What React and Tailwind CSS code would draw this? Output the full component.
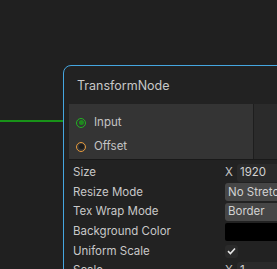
import React from 'react';

const props = [
    { label: "Size", kind: "vec", axis: "X", value: "1920" },
    { label: "Resize Mode", kind: "drop", value: "No Stretch" },
    { label: "Tex Wrap Mode", kind: "drop", value: "Border" },
    { label: "Background Color", kind: "color" },
    { label: "Uniform Scale", kind: "check" },
    { label: "Scale", kind: "vec", axis: "X", value: "1" },
];

const PropValue = ({ p }) => {
    if (p.kind === "vec") {
        return (
            <div className="flex items-center h-full">
                <span className="w-[12px] text-[#c4c4c4]">{p.axis}</span>
                <div className="flex-1 h-[18px] bg-[#2a2a2a] rounded-[3px] pl-[3px] flex items-center text-[#d2d2d2]">{p.value}</div>
            </div>
        );
    }
    if (p.kind === "drop") {
        return (
            <div className="h-[18px] bg-[#464646] rounded-[3px] pl-[3px] flex items-center text-[#d2d2d2] whitespace-nowrap overflow-hidden">{p.value}</div>
        );
    }
    if (p.kind === "color") {
        return <div className="h-[18px] bg-black rounded-[2px]" />;
    }
    return (
        <div className="w-[13px] h-[13px] bg-[#2a2a2a] rounded-[3px] flex items-center justify-center">
            <svg width="9" height="8" viewBox="0 0 9 8">
                <path d="M1 4.2 L3.4 6.5 L8 1.5" stroke="#e6e6e6" strokeWidth="1.6" fill="none" />
            </svg>
        </div>
    );
};

const Port = ({ label, color, fill }) => (
    <div className="flex items-center h-[24px] pl-[7px]">
        <div className={`w-[10px] h-[10px] rounded-full border-[1.5px] ${color} flex items-center justify-center`}>
            <div className={`w-[5px] h-[5px] rounded-full ${fill}`} />
        </div>
        <span className="ml-[8px] text-[#c4c4c4]">{label}</span>
    </div>
);

export default function App() {
    return (
        <div className="relative w-[277px] h-[269px] bg-[#202020] overflow-hidden text-[11.5px]" style={{ fontFamily: "Inter, 'Noto Sans', sans-serif" }}>
            <svg className="absolute left-0 top-0" width="277" height="269">
                <line x1="0" y1="121" x2="67" y2="121" stroke="#189218" strokeWidth="2" />
                <line x1="67" y1="121" x2="77" y2="121" stroke="#189218" strokeWidth="2" strokeDasharray="3 2" />
            </svg>
            <div className="absolute left-[63px] top-[65px] w-[260px] h-[230px] border border-[#45a6e0] rounded-tl-[8px] bg-[#222222]">
                <div className="h-[38px] flex items-center pl-[13px] pt-[2px] text-[12.5px] text-[#c8c8c8]">TransformNode</div>
                <div className="flex h-[56px] ml-[5px] border-b border-[#191919]">
                    <div className="w-[184px] bg-[#343434] flex flex-col justify-center pt-[6px]">
                        <Port label="Input" color="border-[#22b322]" fill="bg-[#1e8a1e]" />
                        <Port label="Offset" color="border-[#e69a3c]" fill="bg-[#1c1c1c]" />
                    </div>
                    <div className="flex-1 bg-[#2b2b2b] border-l border-[#1e1e1e]" />
                </div>
                <div className="pl-[9px] pt-[3px]">
                    {props.map((p) => (
                        <div key={p.label} className="flex items-center h-[19.6px]">
                            <span className="w-[152px] text-[#c8c8c8] whitespace-nowrap">{p.label}</span>
                            <div className="flex-1">
                                <PropValue p={p} />
                            </div>
                        </div>
                    ))}
                </div>
            </div>
        </div>
    );
}
